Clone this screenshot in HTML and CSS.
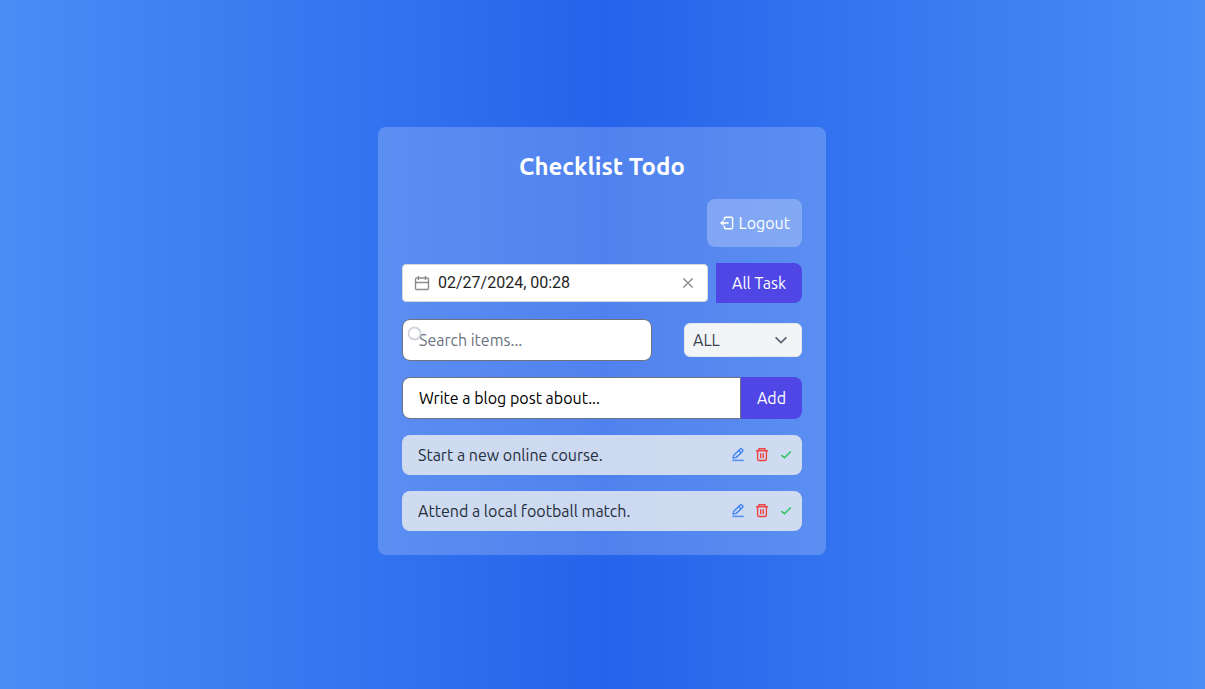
FILE: index.html
```html
<!DOCTYPE html>
<html lang="en">
<head>
<meta charset="utf-8">
<meta name="viewport" content="width=device-width, initial-scale=1">
<title>Checklist Todo</title>
<link rel="stylesheet" href="styles.css">
</head>
<body>
<svg class="sprite" aria-hidden="true">
  <symbol id="edit" viewBox="0 0 16 16"><path class="line" d="M3.200 11l.5-2.700 6.500-6.300q.8-.7 1.600 0l.8.8q.7.8 0 1.600l-6.500 6.200zM8.800 3.500l2.300 2.300"/><path class="underline" d="M2.400 13.400h11.400"/></symbol>
  <symbol id="trash" viewBox="0 0 16 16"><path class="line" d="M2 3.800h12M5 3.600V1.700h6v1.900M3.600 4v8q0 1.500 1.500 1.500h5.800q1.500 0 1.500-1.500V4M6.700 6.200v5M9.300 6.200v5"/></symbol>
  <symbol id="check" viewBox="0 0 16 16"><path class="line" d="M3.400 7.900l3 2.900 6.400-6.300"/></symbol>
</svg>
<main class="page">
  <section class="card">
    <h1 class="title">Checklist Todo</h1>
    <button class="logout" type="button">
      <svg class="icon" viewBox="0 0 16 16" aria-hidden="true"><path class="line" d="M5.400 5.300V3.500q0-1.200 1.200-1.200h5.800q1.200 0 1.200 1.200v9q0 1.200-1.200 1.200H6.600q-1.200 0-1.200-1.200v-1.800M9.600 8H2.600"/><path class="solid" d="M.8 8l3.800-2.700v5.400z"/></svg>
      Logout
    </button>
    <div class="row">
      <div class="date">
        <svg class="icon" viewBox="0 0 16 16" aria-hidden="true"><path class="line" d="M2.800 3h10.400q1.300 0 1.300 1.300v8.900q0 1.300-1.300 1.300H2.800q-1.300 0-1.300-1.300V4.300q0-1.300 1.300-1.300zM1.500 7.500h13M4.500 1v4M11.500 1v4"/></svg>
        <input class="date-input" type="text" value="02/27/2024, 00:28" aria-label="Date and time">
        <button class="clear" type="button" aria-label="Clear date"><svg class="icon" viewBox="0 0 16 16" aria-hidden="true"><path class="line" d="M3.400 3.400l9.200 9.200M12.600 3.400l-9.200 9.200"/></svg></button>
      </div>
      <button class="primary" type="button">All Task</button>
    </div>
    <div class="row filters">
      <div class="search">
        <input class="field" type="search" placeholder="Search items..." aria-label="Search items">
        <svg class="lens" viewBox="0 0 16 16" aria-hidden="true"><circle cx="7.500" cy="7.500" r="6"/></svg>
      </div>
      <div class="picker">
        <select class="select" aria-label="Filter"><option>ALL</option></select>
        <svg class="chevron" viewBox="0 0 16 16" aria-hidden="true"><path class="line" d="M2.600 5.400L8 10.600l5.400-5.200"/></svg>
      </div>
    </div>
    <form class="add">
      <input class="field new-item" type="text" value="Write a blog post about..." aria-label="New item">
      <button class="primary" type="button">Add</button>
    </form>
    <ul class="list">
      <li class="item"><span class="text">Start a new online course.</span>
        <button class="action edit" type="button" aria-label="Edit"><svg class="icon"><use href="#edit"/></svg></button>
        <button class="action trash" type="button" aria-label="Delete"><svg class="icon"><use href="#trash"/></svg></button>
        <button class="action check" type="button" aria-label="Complete"><svg class="icon"><use href="#check"/></svg></button>
      </li>
      <li class="item"><span class="text">Attend a local football match.</span>
        <button class="action edit" type="button" aria-label="Edit"><svg class="icon"><use href="#edit"/></svg></button>
        <button class="action trash" type="button" aria-label="Delete"><svg class="icon"><use href="#trash"/></svg></button>
        <button class="action check" type="button" aria-label="Complete"><svg class="icon"><use href="#check"/></svg></button>
      </li>
    </ul>
  </section>
</main>
</body>
</html>
```

FILE: styles.css
```css
*, *::before, *::after { box-sizing: border-box; }
body {
  margin: 0;
  font: 16px/24px Ubuntu, "Noto Sans", sans-serif;
  color: #1f2f3d;
}
button, input, select { font: inherit; color: inherit; margin: 0; }
button { border: 0; background: none; padding: 0; cursor: pointer; }
.sprite { display: none; }
.icon { display: block; width: 16px; height: 16px; flex: none; }
.line { fill: none; stroke: currentColor; stroke-width: 1.4; }
.underline { fill: none; stroke: currentColor; stroke-width: 1.6; opacity: .8; }
.solid { fill: currentColor; }

.page {
  min-height: 100vh;
  display: flex;
  align-items: center;
  justify-content: center;
  padding: 0 17px 8px 16px;
  background: linear-gradient(to right, #4a8df5, #2563eb, #4a8df5);
}
.card {
  width: 100%;
  max-width: 448px;
  padding: 24px;
  border-radius: 8px;
  background: rgba(255, 255, 255, .2);
  display: flex;
  flex-direction: column;
  gap: 16px;
}
.title {
  margin: 0;
  font-size: 24px;
  line-height: 32px;
  font-weight: 700;
  text-align: center;
  color: #fff;
}
.logout {
  align-self: flex-end;
  display: flex;
  align-items: center;
  gap: 4px;
  padding: 12px;
  border-radius: 8px;
  background: rgba(255, 255, 255, .25);
  color: #fff;
}
.row { display: flex; align-items: center; gap: 8px; }
.date {
  flex: 1;
  min-width: 0;
  display: flex;
  align-items: center;
  gap: 8px;
  padding: 6px 11px;
  border: 1px solid #d9d9d9;
  border-radius: 4px;
  background: #fff;
  color: #8c8c8c;
}
.date-input {
  flex: 1;
  min-width: 0;
  padding: 0;
  border: 0;
  outline: 0;
  background: none;
  font-family: Roboto, sans-serif;
  color: #1f1f1f;
}
.primary {
  padding: 8px 16px;
  background: #4f46e5;
  color: #fff;
  border-radius: 0 8px 8px 0;
  white-space: nowrap;
}
.filters { gap: 32px; }
.search { position: relative; flex: 1; min-width: 0; }
.field {
  display: block;
  width: 100%;
  min-width: 0;
  padding: 8px 16px;
  border: 1px solid #6b7280;
  border-radius: 8px;
  background: #fff;
  outline: 0;
  appearance: none;
}
.field::placeholder { color: #6b7280; opacity: 1; }
.lens { position: absolute; left: 5px; top: 7px; width: 16px; height: 16px; }
.lens circle { fill: none; stroke: #d1d5db; stroke-width: 1.8; }
.picker { position: relative; width: 118px; color: #374151; }
.select {
  display: block;
  width: 100%;
  padding: 4px 8px;
  border: 1px solid #e5e7eb;
  border-radius: 6px;
  background: #f3f4f6;
  appearance: none;
}
.chevron { position: absolute; right: 13px; top: 9px; width: 16px; height: 16px; color: #566171; }
.chevron .line { stroke-width: 1.7; }
.add { display: flex; }
.new-item { flex: 1; border-radius: 8px 0 0 8px; color: #000; }
.list { list-style: none; margin: 0; padding: 0; display: grid; gap: 16px; }
.item {
  display: flex;
  align-items: center;
  gap: 8px;
  padding: 8px 8px 8px 16px;
  border-radius: 8px;
  background: rgba(236, 239, 240, .8);
}
.text { flex: 1; }
.edit { color: #3b82f6; }
.trash { color: #ef4444; }
.check { color: #22c55e; }
```
